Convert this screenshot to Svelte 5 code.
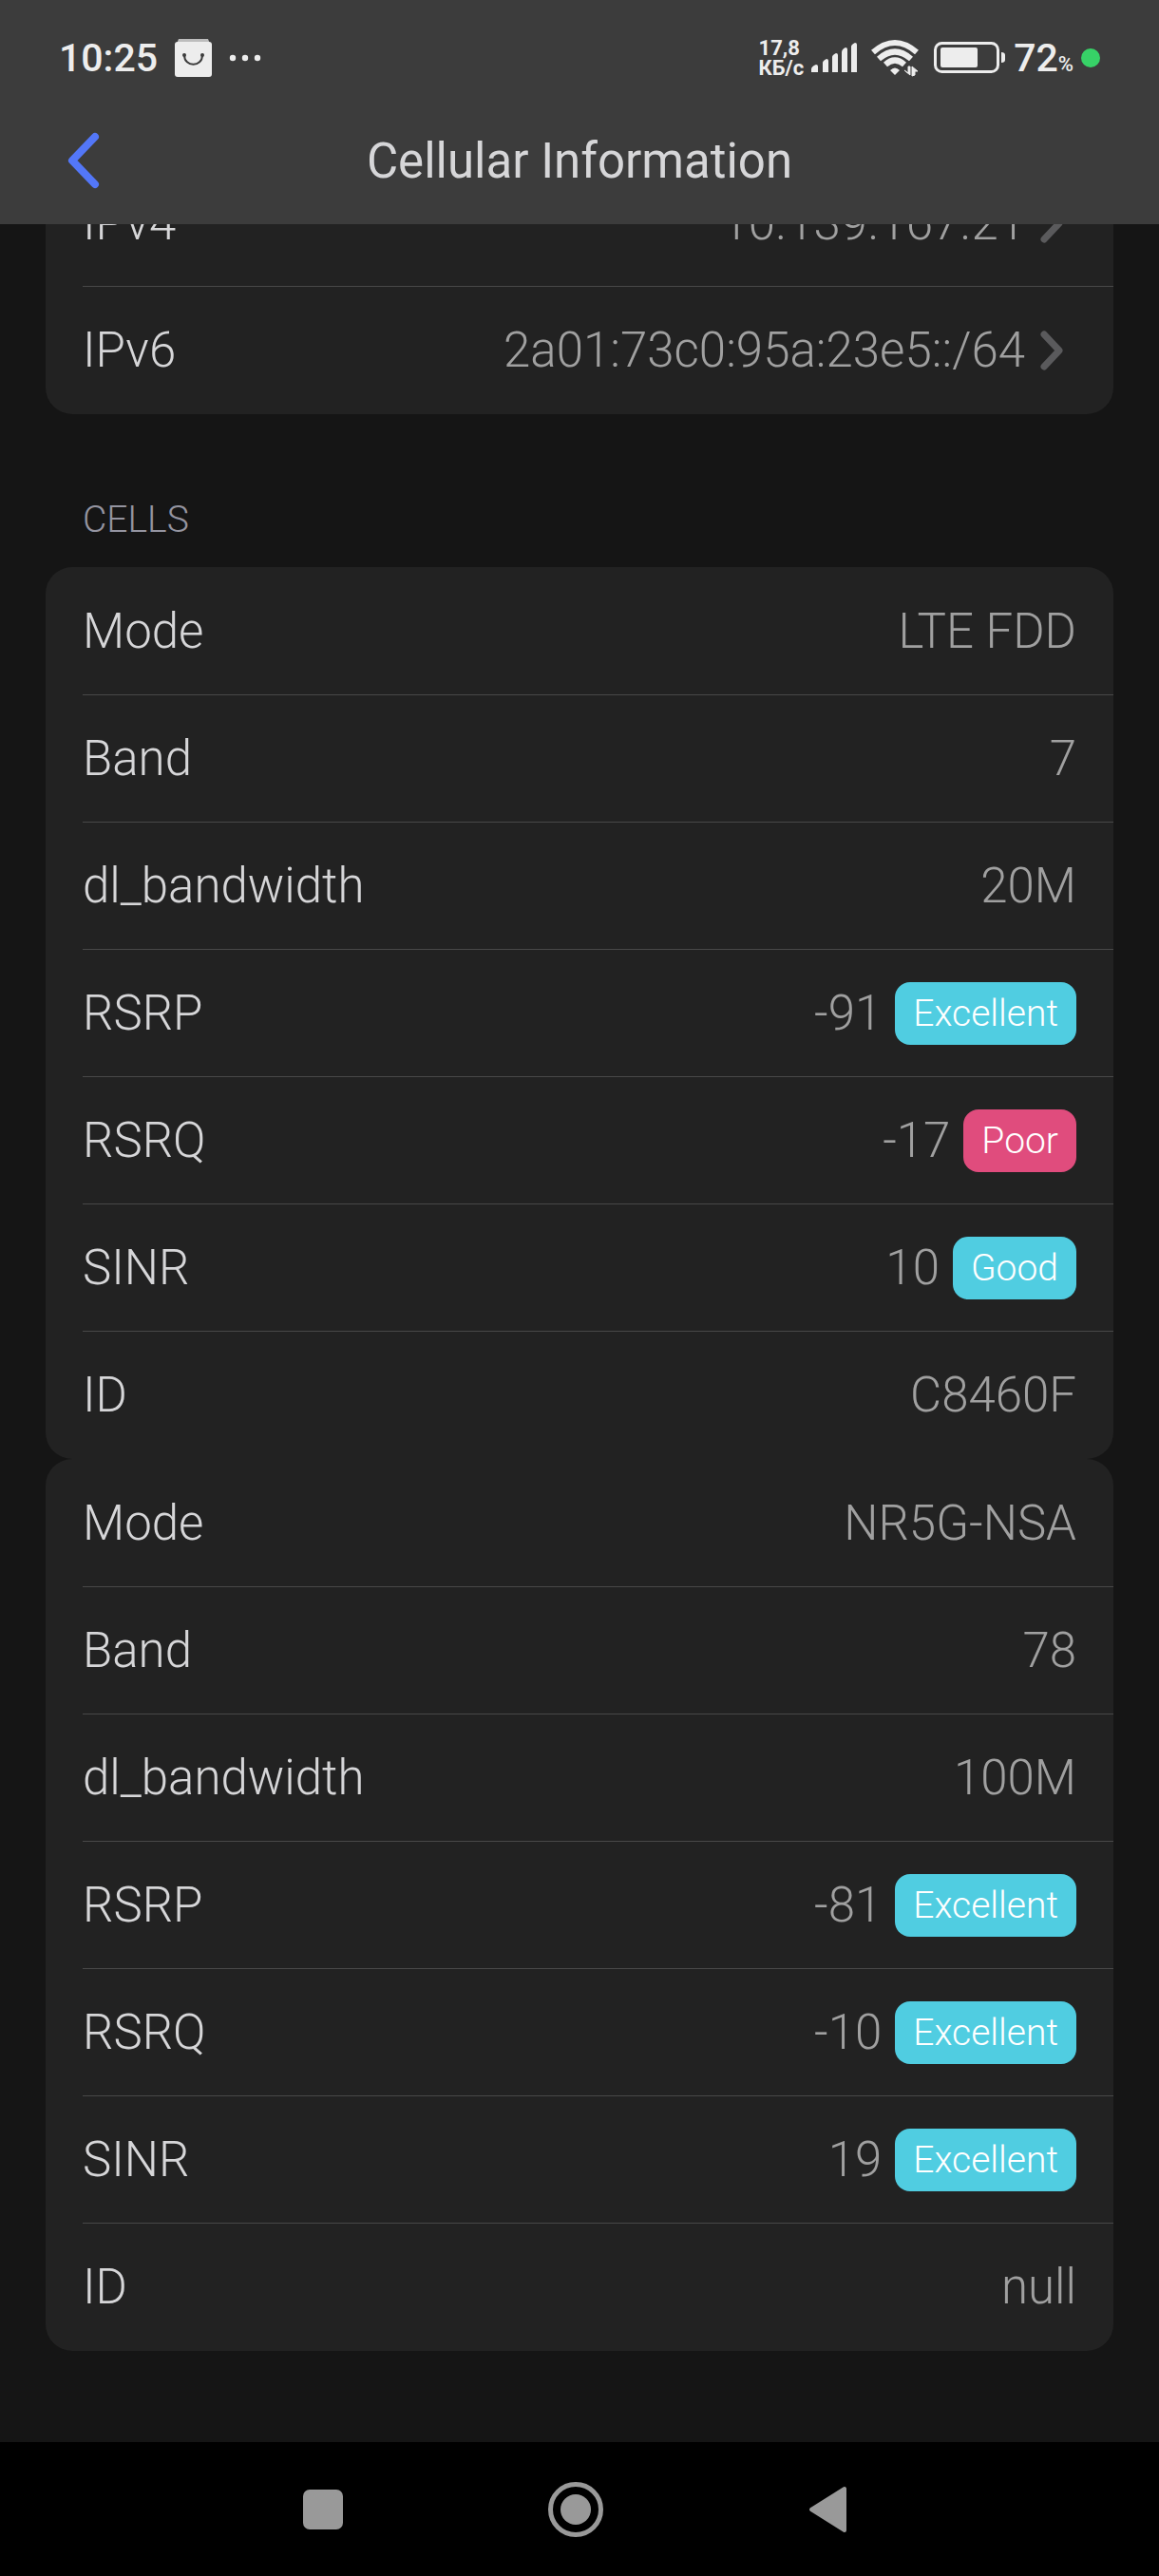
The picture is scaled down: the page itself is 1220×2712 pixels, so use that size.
<script lang="ts">
  type Row = {
    label: string;
    value: string;
    rating?: string;
    poor?: boolean;
  };

  const addresses: Row[] = [
    { label: 'IPv4', value: '10.139.167.21' },
    { label: 'IPv6', value: '2a01:73c0:95a:23e5::/64' }
  ];

  const cells: Row[][] = [
    [
      { label: 'Mode', value: 'LTE FDD' },
      { label: 'Band', value: '7' },
      { label: 'dl_bandwidth', value: '20M' },
      { label: 'RSRP', value: '-91', rating: 'Excellent' },
      { label: 'RSRQ', value: '-17', rating: 'Poor', poor: true },
      { label: 'SINR', value: '10', rating: 'Good' },
      { label: 'ID', value: 'C8460F' }
    ],
    [
      { label: 'Mode', value: 'NR5G-NSA' },
      { label: 'Band', value: '78' },
      { label: 'dl_bandwidth', value: '100M' },
      { label: 'RSRP', value: '-81', rating: 'Excellent' },
      { label: 'RSRQ', value: '-10', rating: 'Excellent' },
      { label: 'SINR', value: '19', rating: 'Excellent' },
      { label: 'ID', value: 'null' }
    ]
  ];
</script>

<div class="screen">
  <header>
    <div class="status">
      <div class="status-left">
        <span class="time">10:25</span>
        <svg width="39" height="40" viewBox="0 0 39 40" aria-hidden="true">
          <path d="M4 0h31l2 5H2z" fill="#bdbdbd" />
          <rect y="3" width="39" height="37" rx="3" fill="#ededed" />
          <path d="M10 17c0 13 19 13 19 0" fill="none" stroke="#3c3c3c" stroke-width="2" />
          <circle cx="10" cy="17" r="2" fill="#3c3c3c" />
          <circle cx="29" cy="17" r="2" fill="#3c3c3c" />
        </svg>
        <svg class="dots" width="34" height="8" viewBox="0 0 34 8" fill="#ededed" aria-hidden="true">
          <circle cx="4" cy="4" r="3.2" />
          <circle cx="17" cy="4" r="3.2" />
          <circle cx="30" cy="4" r="3.2" />
        </svg>
      </div>
      <div class="status-right">
        <span class="speed"><span>17,8</span><span>КБ/с</span></span>
        <svg class="signal" width="50" height="40" viewBox="0 0 50 40" fill="#ededed" aria-hidden="true">
          <path d="M0 35v-3q0-3 5-5q2 0 2 2v6z" />
          <path d="M12 35V25q0-2 4-4q2 0 2 2v12z" />
          <path d="M22 35V19q0-2 4-4q2 0 2 2v18z" />
          <path d="M32 35V14q0-3 4-5q2 0 2 2v24z" />
          <path d="M42 35V8q0-2 4-4q2 0 2 2v29z" />
        </svg>
        <svg class="wifi" width="50" height="40" viewBox="0 0 50 40" aria-hidden="true">
          <g fill="none" stroke="#ededed" stroke-width="6">
            <path d="M2 14Q25-6 48 14" />
            <path d="M8 21Q25 6 42 21" />
            <path d="M15 27Q25 18 35 27" />
          </g>
          <path d="M20 33q5-5 10 0l-5 5z" fill="#ededed" />
          <path d="M35 33l4 3V29h2v9zM43 39V29l6 5h-3v4z" fill="#ededed" stroke="#ededed" />
        </svg>
        <svg class="battery" width="76" height="34" viewBox="0 0 76 34" aria-hidden="true">
          <rect x="1.5" y="1.5" width="66" height="30" rx="7" fill="none" stroke="#ededed" stroke-width="3" />
          <rect x="7" y="6" width="39" height="21" rx="2" fill="#ededed" />
          <path d="M71 11q4 0 4 3v5q0 3-4 3z" fill="#ededed" />
        </svg>
        <span class="percent">72<small>%</small></span>
        <span class="mic"></span>
      </div>
    </div>
    <div class="titlebar">
      <button class="back" aria-label="Back">
        <svg width="34" height="60" viewBox="0 0 34 60" aria-hidden="true">
          <path d="M29 5L5 30l24 25" fill="none" stroke="#5377f8" stroke-width="8" stroke-linecap="round" stroke-linejoin="round" />
        </svg>
      </button>
      <h1>Cellular Information</h1>
    </div>
  </header>

  <main>
    <div class="card">
      {#each addresses as row}
        <button class="row">
          <span class="label">{row.label}</span>
          <span class="value">{row.value}</span>
          <svg class="chevron" width="24" height="42" viewBox="0 0 24 42" aria-hidden="true">
            <path d="M4 4l16 17L4 38" fill="none" stroke="#5a5a5c" stroke-width="7" stroke-linecap="round" stroke-linejoin="round" />
          </svg>
        </button>
      {/each}
    </div>

    <h2>CELLS</h2>
    {#each cells as cell}
      <dl class="card">
        {#each cell as row}
          <div class="row">
            <dt class="label">{row.label}</dt>
            <dd class="value">
              {row.value}
              {#if row.rating}
                <span class="badge" class:poor={row.poor}>{row.rating}</span>
              {/if}
            </dd>
          </div>
        {/each}
      </dl>
    {/each}
  </main>

  <nav>
    <button aria-label="Recent apps">
      <svg width="60" height="60" viewBox="0 0 60 60" aria-hidden="true">
        <rect x="9" y="9" width="42" height="42" rx="7" fill="#999" />
      </svg>
    </button>
    <button aria-label="Home">
      <svg width="60" height="60" viewBox="0 0 60 60" aria-hidden="true">
        <circle cx="30" cy="30" r="26.5" fill="none" stroke="#999" stroke-width="5" />
        <circle cx="30" cy="30" r="16" fill="#999" />
      </svg>
    </button>
    <button aria-label="Back">
      <svg width="60" height="60" viewBox="0 0 60 60" aria-hidden="true">
        <path d="M12 30L47 8v44z" fill="#999" stroke="#999" stroke-width="4" stroke-linejoin="round" />
      </svg>
    </button>
  </nav>
</div>

<style>
:global(body) {
  margin: 0;
  background: #151515;
}
.screen {
  display: flex;
  flex-direction: column;
  min-height: 100vh;
  background: #151515;
  color: #d6d6d8;
  font-family: Roboto, "Noto Sans", sans-serif;
  font-size: 51px;
  font-weight: 300;
}
button {
  border: 0;
  padding: 0;
  background: none;
  color: inherit;
  font: inherit;
  cursor: pointer;
}
svg { display: block; flex: none; }

header {
  position: sticky;
  top: 0;
  z-index: 1;
  background: #3c3c3c;
}
.status {
  display: flex;
  justify-content: space-between;
  align-items: center;
  box-sizing: border-box;
  height: 106px;
  padding: 16px 62px 0 62px;
  color: #ededed;
}
.status-left, .status-right { display: flex; align-items: center; }
.time, .percent {
  font-size: 41px;
  font-weight: 500;
  line-height: 52px;
}
.time { margin-right: 18px; }
.dots { margin-left: 18px; }
.speed {
  display: flex;
  flex-direction: column;
  font-size: 22px;
  line-height: 21px;
  font-weight: 700;
}
.signal { margin-left: 8px; }
.wifi { margin-left: 13px; }
.battery { margin-left: 16px; }
.percent { margin-left: 8px; }
.percent small {
  font-size: 22px;
  line-height: 22px;
}
.mic {
  width: 20px;
  height: 20px;
  margin-left: 8px;
  border-radius: 50%;
  background: #37d267;
}

.titlebar {
  display: grid;
  grid-template-columns: 120px 1fr 120px;
  align-items: start;
  height: 130px;
}
.back { justify-self: center; padding: 33px 16px; margin-left: 56px; }
h1 {
  margin: 0;
  padding: 32px 0;
  text-align: center;
  font-size: 51px;
  font-weight: 400;
  line-height: 64px;
}

main {
  flex: 1;
  margin-top: -69px;
  padding: 0 48px 96px;
}
.card {
  margin: 0;
  padding-top: 1px;
  border-radius: 28px;
  background: #222;
  overflow: hidden;
}
.row {
  display: flex;
  align-items: center;
  box-sizing: border-box;
  width: calc(100% - 39px);
  height: 134px;
  margin-left: 39px;
  padding-right: 39px;
  border-bottom: 1px solid #484848;
}
.row:last-child { border-bottom-color: transparent; }
.label { margin-right: auto; }
.value {
  display: flex;
  align-items: center;
  gap: 14px;
  margin-left: 0;
  color: #a0a0a0;
}
.chevron { margin: 0 14px 0 16px; }
.badge {
  padding: 0 19px;
  border-radius: 16px;
  background: #50cde1;
  color: #fff;
  font-size: 39px;
  line-height: 66px;
}
.badge.poor { background: #e04c7d; }
h2 {
  margin: 0;
  padding: 87px 39px 26px;
  color: #9494a0;
  font-size: 39px;
  font-weight: 300;
  line-height: 48px;
}

nav {
  display: flex;
  justify-content: center;
  align-items: center;
  gap: 206px;
  height: 142px;
  padding-right: 8px;
  background: #000;
}
</style>
